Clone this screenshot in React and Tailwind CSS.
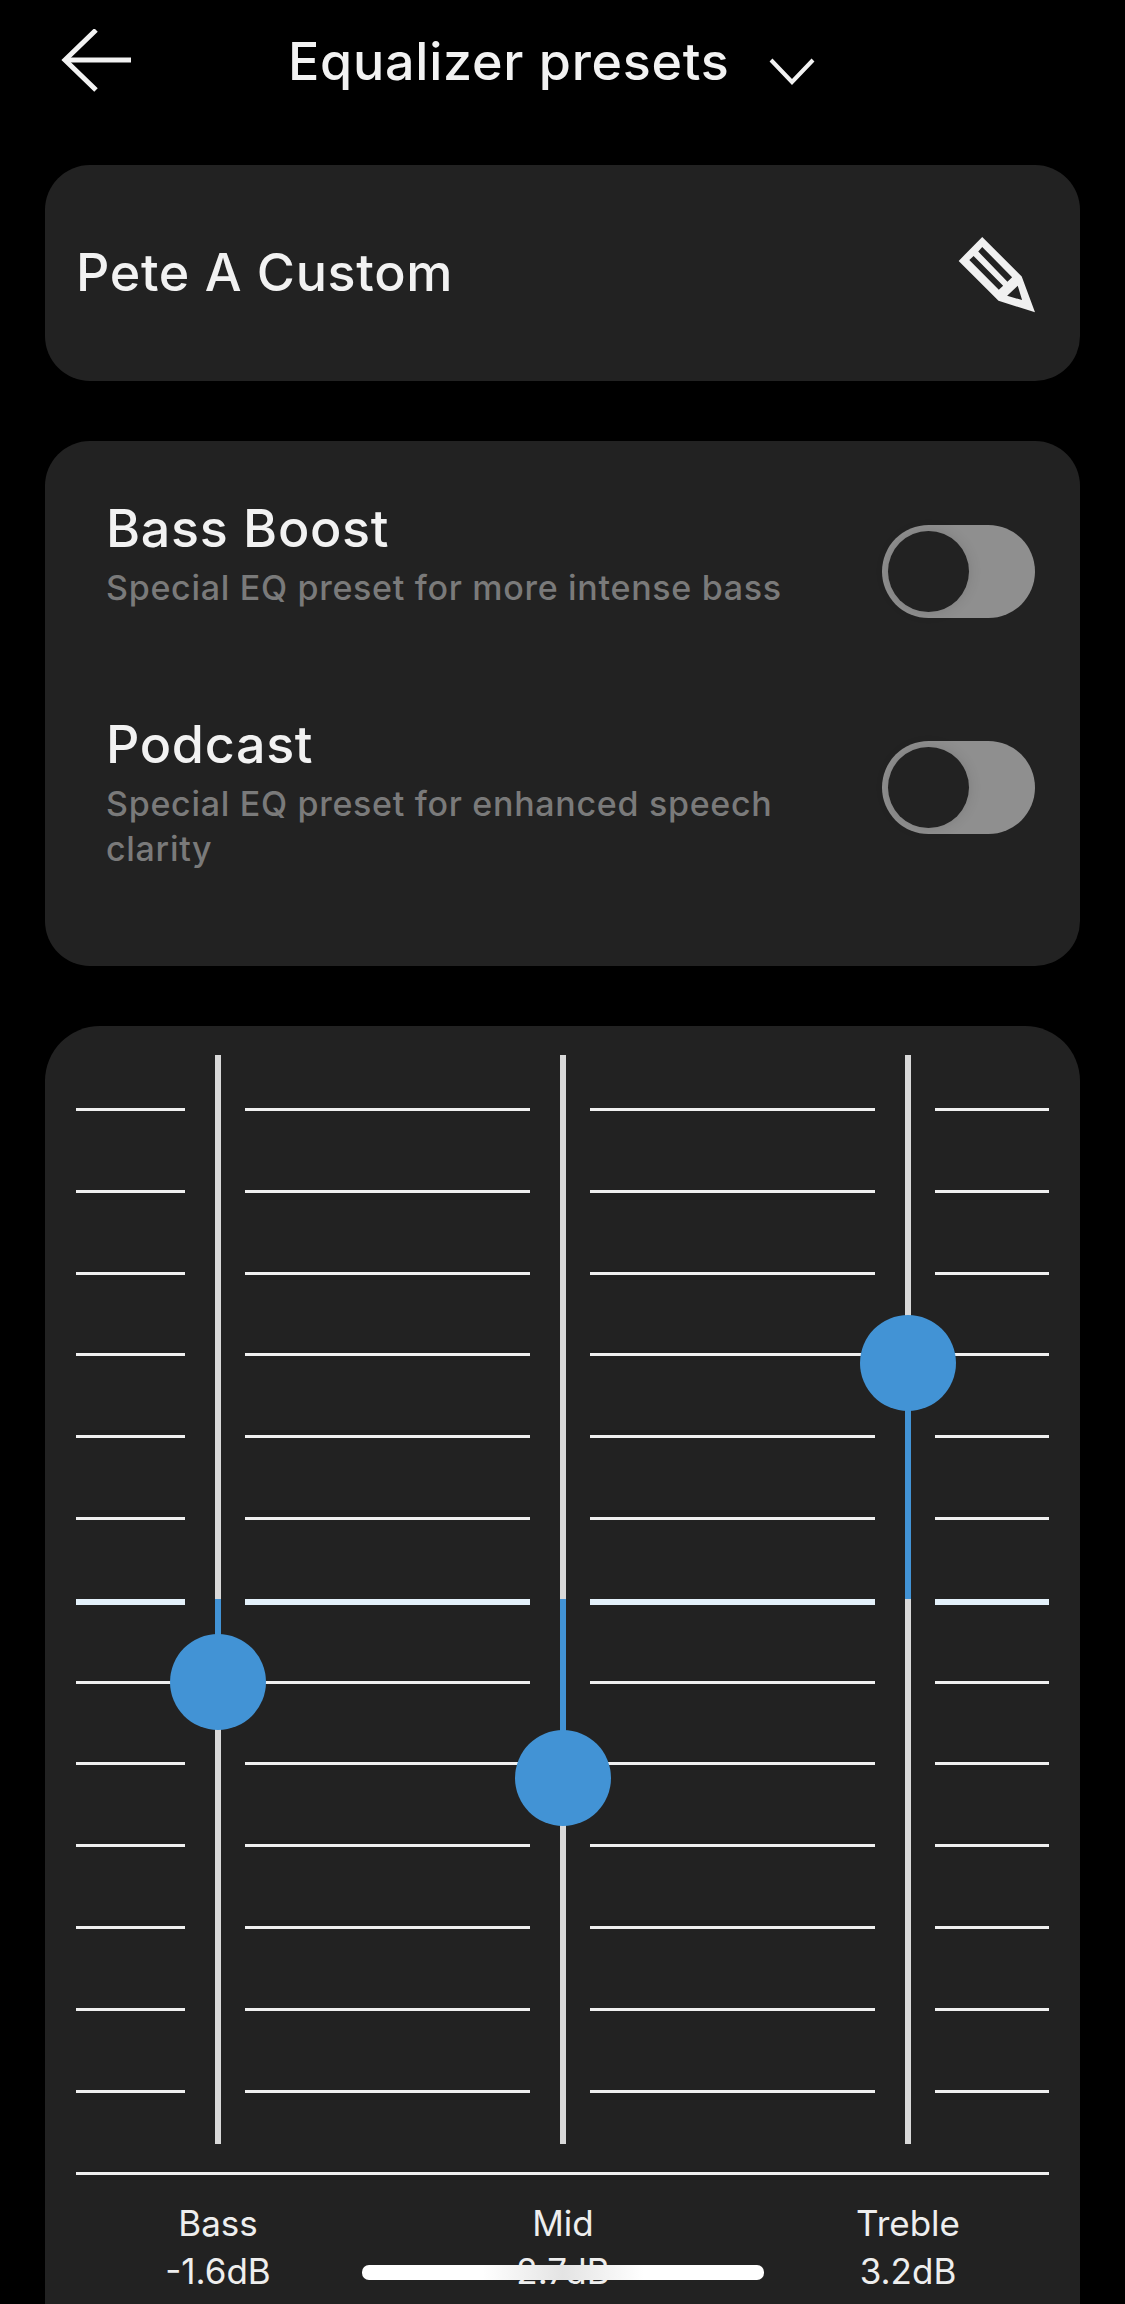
const ticks = Array.from({ length: 13 }, (_, i) => i);

const sliders = [
  { name: 'Bass', value: '-1.6dB', track: 'left-[139px]', thumb: 'left-[94px] top-[608px]', fill: 'left-[139px] top-[573px] h-[60px]' },
  { name: 'Mid', value: '2.7dB', track: 'left-[484px]', thumb: 'left-[439px] top-[704px]', fill: 'left-[484px] top-[573px] h-[160px]' },
  { name: 'Treble', value: '3.2dB', track: 'left-[829px]', thumb: 'left-[784px] top-[289px]', fill: 'left-[829px] top-[337px] h-[236px]' },
];

const Toggle = () => (
  <div className="flex h-[93px] w-[153px] shrink-0 items-center rounded-full bg-[#8f8f8f] pl-[6px]">
    <div className="h-[81px] w-[81px] rounded-full bg-[#222222] shadow-[0_0_14px_rgba(0,0,0,0.12)]" />
  </div>
);

const Preset = ({ title, children, className }) => (
  <div className={`flex items-start justify-between ${className}`}>
    <div className="w-[700px]">
      <div className="text-[52px] leading-[60px] font-medium tracking-[0.7px] text-[#f2f2f2]">{title}</div>
      <div className="mt-[6px] text-[34px] leading-[45px] font-medium tracking-[0.7px] text-[#7a7a7a]">{children}</div>
    </div>
    <div className="mt-[26px]"><Toggle /></div>
  </div>
);

export default function App() {
  return (
    <div className="relative h-[2304px] w-[1125px] overflow-hidden bg-black font-['Inter',sans-serif]">
      {/* Header */}
      <div className="flex h-[165px] items-start pt-[27px]">
        <svg className="ml-[61px] mt-[2px] shrink-0" width="72" height="64" viewBox="0 0 72 64" fill="none" stroke="#f2f2f2" strokeWidth="5">
          <path d="M35 1 L4 31 L35 61" />
          <path d="M4 31 H70" />
        </svg>
        <div className="ml-[155px] mt-[5px] text-[52px] leading-[60px] font-medium tracking-[0.75px] text-[#f2f2f2]">Equalizer presets</div>
        <svg className="ml-[39px] mt-[31px] shrink-0" width="46" height="27" viewBox="0 0 46 27" fill="none" stroke="#f2f2f2" strokeWidth="4">
          <path d="M2 2 L23 24 L44 2" />
        </svg>
      </div>

      {/* Name card */}
      <div className="mx-[45px] flex h-[216px] items-center justify-between rounded-[45px] bg-[#222222] pl-[31px] pr-[44px]">
        <div className="text-[52px] font-medium tracking-[0.7px] text-[#f2f2f2]">Pete A Custom</div>
        <svg width="78" height="77" viewBox="170 100 235 232" className="mt-[2px]">
          <path
            fill="#f0f0f0"
            fillRule="evenodd"
            d="M243 103 L362 222 L402 330 L292 295 L172 175 Z M243 133 L231 147 L319 238 L333 224 Z M217 160 L204 172 L293 262 L306 250 Z M350 250 L318 280 L363 293 Z"
          />
        </svg>
      </div>

      {/* Presets card */}
      <div className="mx-[45px] mt-[60px] h-[525px] rounded-[45px] bg-[#222222] pl-[61px] pr-[45px] pt-[58px]">
        <Preset title="Bass Boost">Special EQ preset for more intense bass</Preset>
        <Preset title="Podcast" className="mt-[97px]">Special EQ preset for enhanced speech clarity</Preset>
      </div>

      {/* Equalizer card */}
      <div className="mx-[45px] mt-[60px] h-[1300px] rounded-t-[55px] bg-[#222222] px-[31px]">
        <div className="relative h-[1118px] pt-[82px]">
          {ticks.map((i) => (
            <div key={i} className="flex h-[81.8px] justify-between">
              <div className={`w-[109px] ${i === 6 ? 'h-[6px] bg-[#e4f1fa]' : 'h-[3px] bg-[#f0f0f0]'}`} />
              <div className={`w-[285px] ${i === 6 ? 'h-[6px] bg-[#e4f1fa]' : 'h-[3px] bg-[#f0f0f0]'}`} />
              <div className={`w-[285px] ${i === 6 ? 'h-[6px] bg-[#e4f1fa]' : 'h-[3px] bg-[#f0f0f0]'}`} />
              <div className={`w-[114px] ${i === 6 ? 'h-[6px] bg-[#e4f1fa]' : 'h-[3px] bg-[#f0f0f0]'}`} />
            </div>
          ))}
          {sliders.map((s) => (
            <div key={s.name}>
              <div className={`absolute top-[29px] h-[1089px] w-[6px] bg-[#d9d9d9] ${s.track}`} />
              <div className={`absolute w-[6px] bg-[#4293d5] ${s.fill}`} />
              <div className={`absolute h-[96px] w-[96px] rounded-full bg-[#4293d5] ${s.thumb}`} />
            </div>
          ))}
        </div>
        <div className="mt-[28px] h-[3px] bg-[#f0f0f0]" />
        <div className="mt-[24px] flex text-center text-[35px] leading-[48px] text-[#eeeeee]">
          <div className="ml-[42px] w-[200px]"><div>Bass</div><div>-1.6dB</div></div>
          <div className="ml-[145px] w-[200px]"><div>Mid</div><div>2.7dB</div></div>
          <div className="ml-[145px] w-[200px]"><div>Treble</div><div>3.2dB</div></div>
        </div>
      </div>

      {/* Home indicator */}
      <div className="absolute left-[362px] top-[2265px] h-[15px] w-[402px] rounded-[7px] bg-[linear-gradient(90deg,#ffffff_30%,#e4e4e4_50%,#ffffff_70%)]" />
    </div>
  );
}
